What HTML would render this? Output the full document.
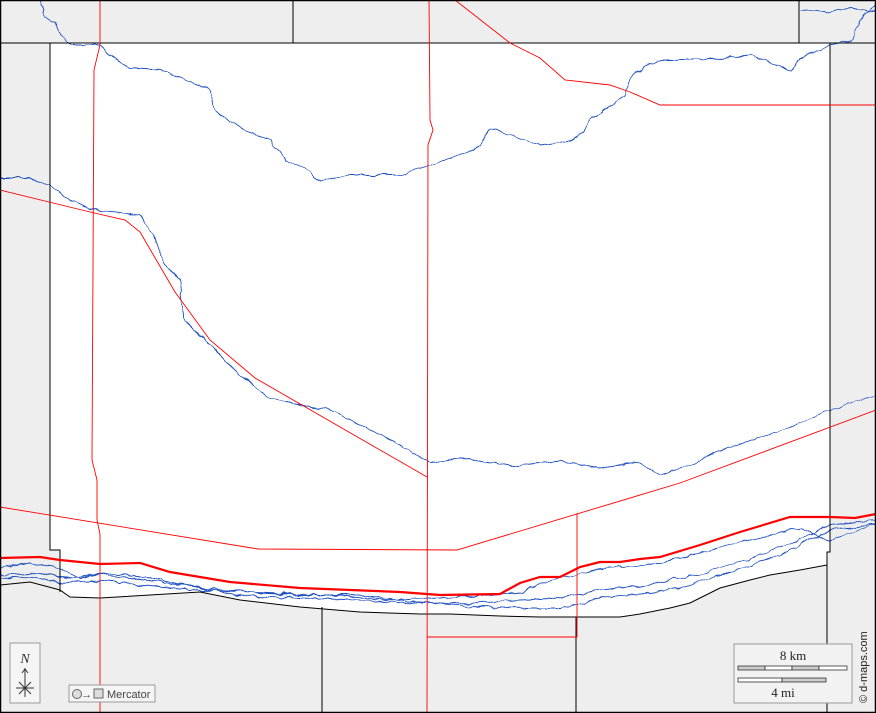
<!DOCTYPE html>
<html><head><meta charset="utf-8"><style>
html,body{margin:0;padding:0;background:#fff}
svg{display:block}
text{font-family:"Liberation Serif",serif}
</style></head><body>
<svg width="876" height="713" viewBox="0 0 876 713" xmlns="http://www.w3.org/2000/svg">
<defs>
<filter id="w" x="-5%" y="-5%" width="110%" height="110%">
<feTurbulence type="fractalNoise" baseFrequency="0.09" numOctaves="2" seed="3"/>
<feDisplacementMap in="SourceGraphic" scale="6" xChannelSelector="R" yChannelSelector="G"/>
</filter>
</defs>
<rect width="876" height="713" fill="#eeeeee"/>
<path d="M50,43 L830,43 L830,552 L827,552 L827,565 L800,570 L770,575 L750,580 L720,588 L700,598 L690,603 L670,608 L640,614 L620,617 L540,617 L500,616 L450,614 L420,614 L360,612 L300,607 L240,600 L200,592 L150,595 L100,598 L70,597 L60,590 L60,550 L50,550 Z" fill="#fff"/>
<g fill="none" stroke="#1f4fbf" stroke-width="0.9" filter="url(#w)">
<path d="M40,0 L45,15 L55,22 L60,35 L72,45 L100,45 L110,55 L130,68 L160,70 L185,80 L210,90 L215,110 L240,128 L270,140 L285,160 L305,168 L320,182 L345,175 L400,175 L430,165 L460,155 L480,145 L490,128 L510,135 L540,145 L575,140 L590,120 L605,110 L625,95 L632,75 L645,66 L660,60 L700,60 L750,55 L790,70 L800,58 L830,45 L852,40 L858,22 L876,5"/>
<path d="M800,10 L830,12 L850,8 L876,12"/>
<path d="M0,178 L30,178 L50,186 L70,200 L90,210 L140,215 L155,240 L165,265 L180,280 L185,320 L210,345 L240,375 L270,398 L300,405 L330,410 L360,425 L400,445 L430,462 L470,458 L510,466 L560,460 L600,468 L640,463 L660,476 L690,465 L720,450 L770,435 L800,423 L830,410 L860,400 L876,395"/>
<path d="M0,568 L30,563 L60,568 L80,578 L110,573 L150,578 L200,588 L240,596 L300,598 L360,600 L420,604 L480,603 L520,600 L560,598 L600,590 L640,586 L700,574 L760,555 L800,540 L830,525 L876,520"/>
<path d="M0,575 L40,573 L70,578 L100,574 L130,578 L180,585 L220,590 L260,593 L300,595 L360,595 L420,603 L480,607 L530,608 L560,608 L600,598 L640,594 L680,588 L720,576 L780,555 L830,530 L876,525"/>
<path d="M0,578 L30,577 L60,582 L100,580 L140,585 L190,590 L240,592 L300,594 L340,596 L390,600 L430,598 L480,596 L520,592 L560,578 L600,568 L640,566 L680,558 L740,542 L800,528 L830,540 L876,525"/>
</g>
<g fill="none" stroke="#000" stroke-width="1">
<path d="M0,43 L876,43"/>
<path d="M293,0 L293,43 M799,0 L799,43"/>
<path d="M50,43 L50,550 L60,550 L60,592"/>
<path d="M830,43 L830,552 L827,552 L827,713"/>
<path d="M0,585 L30,582 L60,590 L70,597 L100,598 L150,595 L200,592 L240,600 L300,607 L360,612 L420,614 L450,614 L500,616 L540,617 L580,617 L620,617 L640,614 L670,608 L690,603 L700,598 L720,588 L750,580 L770,575 L800,570 L827,565"/>
<path d="M322,607 L322,713 M576,617 L576,713"/>
</g>
<g fill="none" stroke="#ff0000" stroke-width="0.9">
<path d="M100,0 L100,45 L94,70 L92,460 L97,480 L97,520 L100,534 L100,713"/>
<path d="M429,0 L430,120 L433,130 L428,145 L427,713"/>
<path d="M455,0 L510,43 L540,58 L565,80 L610,85 L630,92 L660,105 L876,105"/>
<path d="M0,190 L90,212 L125,220 L140,232 L175,292 L210,340 L255,378 L427,477"/>
<path d="M0,507 L258,549 L457,550 L680,483 L876,410"/>
<path d="M577,513 L577,637 L427,637"/>
</g>
<path d="M0,558 L40,557 L60,560 L100,564 L140,563 L170,572 L230,582 L300,588 L400,592 L440,595 L500,594 L520,583 L540,577 L560,577 L580,567 L600,562 L620,562 L640,559 L660,557 L700,545 L740,532 L790,517 L830,517 L855,518 L876,514" fill="none" stroke="#ff0000" stroke-width="2.2"/>
<rect x="0.5" y="0.5" width="875" height="712" fill="none" stroke="#000" stroke-width="1.5"/>
<rect x="10" y="643" width="30" height="60" fill="#f5f5f5" stroke="#999"/>
<text x="25" y="663" font-size="14" font-style="italic" text-anchor="middle" fill="#333">N</text>
<g stroke="#333" stroke-width="1" fill="none">
<path d="M25,668 L25,697 M22,673 L25,669 L28,673 M16,688 L34,688 M19,682 L31,694 M31,682 L19,694"/>
</g>
<rect x="69" y="685" width="86" height="17" fill="#f5f5f5" stroke="#999"/>
<circle cx="77" cy="694" r="4.5" fill="#ddd" stroke="#666"/>
<text x="81" y="698" font-size="11" style="font-family:'Liberation Sans',sans-serif" fill="#444">→</text>
<rect x="94" y="689" width="9" height="9" fill="#ddd" stroke="#666"/>
<text x="107" y="698" font-size="11" style="font-family:'Liberation Sans',sans-serif" fill="#444">Mercator</text>
<rect x="734" y="644" width="118" height="59" fill="#f2f2f2" stroke="#999"/>
<text x="793" y="660" font-size="13" text-anchor="middle" fill="#222">8 km</text>
<g stroke="#333" stroke-width="0.8">
<rect x="738" y="666" width="27" height="4" fill="#ccc"/>
<rect x="765" y="666" width="27" height="4" fill="#fff"/>
<rect x="792" y="666" width="27" height="4" fill="#ccc"/>
<rect x="819" y="666" width="28" height="4" fill="#fff"/>
<rect x="738" y="678" width="44" height="4" fill="#fff"/>
<rect x="782" y="678" width="44" height="4" fill="#ccc"/>
</g>
<text x="783" y="697" font-size="13" text-anchor="middle" fill="#222">4 mi</text>
<text transform="translate(867,703) rotate(-90)" font-size="11" style="font-family:'Liberation Sans',sans-serif" fill="#222">© d-maps.com</text>
</svg>
</body></html>
